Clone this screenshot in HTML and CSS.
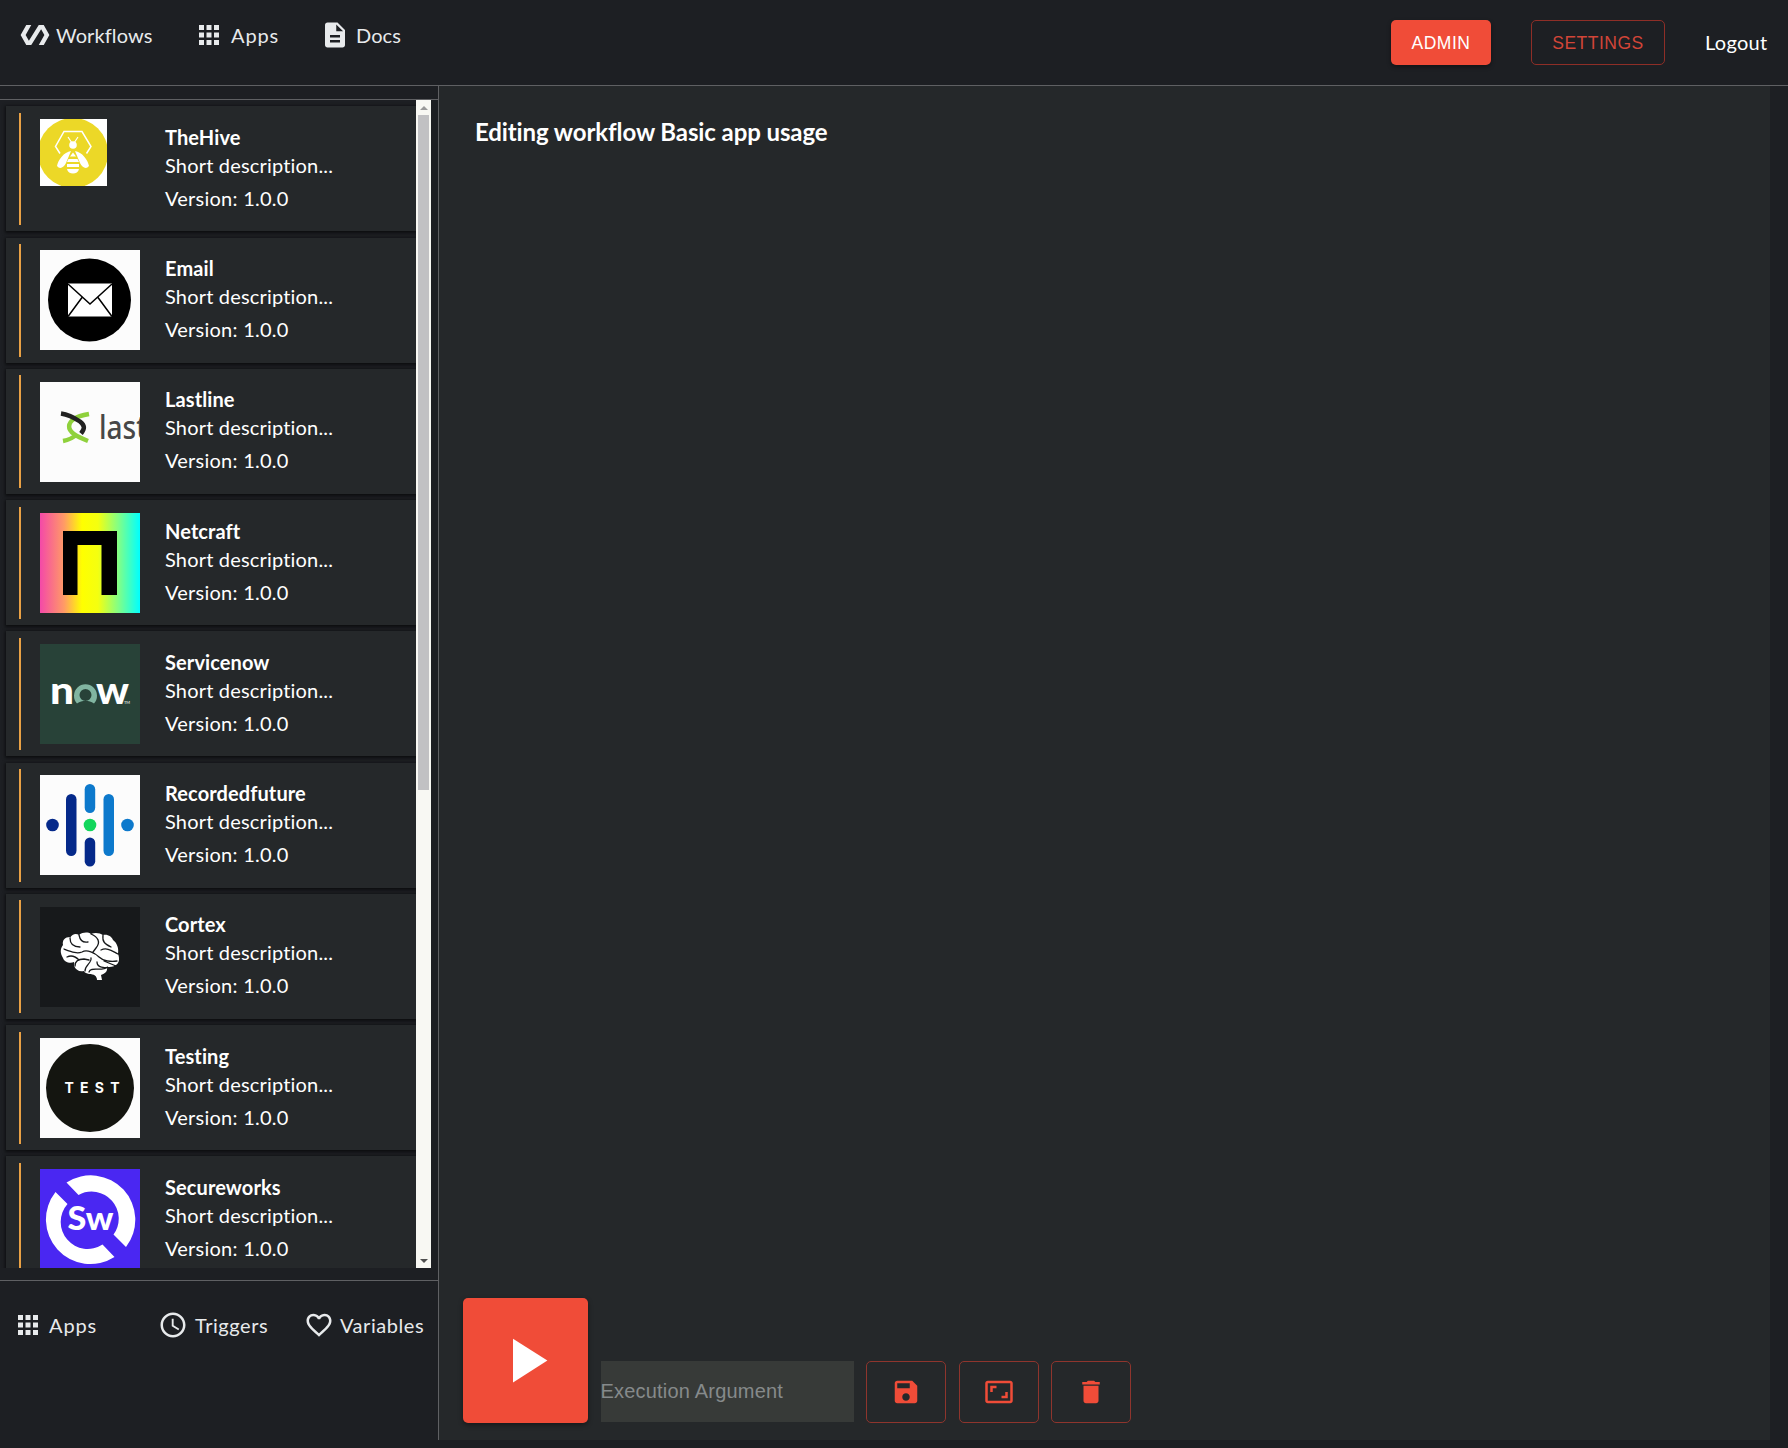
FILE: index.html
```html
<!DOCTYPE html>
<html lang="en">
<head>
<meta charset="utf-8">
<title>Editing workflow Basic app usage</title>
<link rel="stylesheet" href="styles.css">
</head>
<body>
<svg class="defs" width="0" height="0">
  <symbol id="grid" viewBox="0 0 24 24"><path d="M4 8h4V4H4v4zm6 12h4v-4h-4v4zm-6 0h4v-4H4v4zm0-6h4v-4H4v4zm6 0h4v-4h-4v4zm6-10v4h4V4h-4zm-6 4h4V4h-4v4zm6 6h4v-4h-4v4zm0 6h4v-4h-4v4z"/></symbol>
</svg>
<header class="header">
  <nav class="nav">
    <a class="nav-item nav-workflows"><svg class="icon" viewBox="0 0 24 24"><path d="M19 4h-4L7.11 16.63 4.5 12 9 4H5L.5 12 5 20h4l7.89-12.63L19.5 12 15 20h4l4.5-8z"/></svg><span>Workflows</span></a>
    <a class="nav-item nav-apps"><svg class="icon"><use href="#grid"/></svg><span class="wide">Apps</span></a>
    <a class="nav-item nav-docs"><svg class="icon" viewBox="0 0 24 24"><path d="M14 2H6c-1.1 0-1.99.9-1.99 2L4 20c0 1.1.89 2 1.99 2H18c1.1 0 2-.9 2-2V8l-6-6zm2 16H8v-2h8v2zm0-4H8v-2h8v2zm-3-5V3.5L18.500 9H13z"/></svg><span>Docs</span></a>
  </nav>
  <div class="account">
    <button class="btn btn-filled">ADMIN</button>
    <button class="btn btn-outline">SETTINGS</button>
    <a class="logout">Logout</a>
  </div>
</header>
<main class="main">
  <aside class="side">
    <div class="list">
      <div class="cards">
        <article class="card"><i class="bar"></i>
          <svg class="thumb thumb-small" viewBox="0 0 67 67"><path fill="#fff" d="M0 0h67v67H0z"/><circle cx="33" cy="34" r="35" fill="#ecd827"/><path d="M20 34.500L15.500 27.500 24 12.500h18l9 15-4.500 7" fill="none" stroke="#fff" stroke-width="1.500"/><g fill="#fff"><circle cx="33" cy="26" r="3.800"/><path d="M31 32c-7 1-13 9-14 15 3 4 7 1 9-3zM35 32c7 1 13 9 14 15-3 4-7 1-9-3z"/><path d="M30 37.500l3-4 3 4zM28.500 40h9l1.500 3H27zM27 45h12v3H27zM27 50h12c-1 6-11 6-12 0z"/></g><path d="M28 18l4 6M38 18l-4 6" stroke="#fff" stroke-width="1.200"/></svg>
          <div class="info"><h3>TheHive</h3><p class="desc">Short description...</p><p class="ver">Version: 1.0.0</p></div></article>
        <article class="card"><i class="bar"></i>
          <svg class="thumb" viewBox="0 0 100 100"><path fill="#fcfcfc" d="M0 0h100v100H0z"/><circle cx="49.500" cy="50" r="41.500"/><path fill="#fff" d="M28 33.500h44v33H28z"/><path d="M28 34l22 20 22-20M28 66.500l14-19M72 66.500l-14-19" fill="none" stroke="#000" stroke-width="1.500"/></svg>
          <div class="info"><h3>Email</h3><p class="desc">Short description...</p><p class="ver">Version: 1.0.0</p></div></article>
        <article class="card"><i class="bar"></i>
          <svg class="thumb" viewBox="0 0 100 100"><path fill="#fcfcfc" d="M0 0h100v100H0z"/><g fill="none" stroke-width="4.500"><path d="M23 59c6-1 10-3 14-7M48 59c-5-2-10-4-14-7-7-5-6-11 0-15 4-3 9-4 15-5" stroke="#8fd13c"/><path d="M21 31.500c7 1 13 4 19 8 5 4 5 7 1 12" stroke="#222"/></g><text x="59" y="57" font-family="Noto Sans" font-weight="500" font-size="33" textLength="48" lengthAdjust="spacingAndGlyphs" fill="#474747">last</text></svg>
          <div class="info"><h3>Lastline</h3><p class="desc">Short description...</p><p class="ver">Version: 1.0.0</p></div></article>
        <article class="card"><i class="bar"></i>
          <svg class="thumb" viewBox="0 0 100 100"><linearGradient id="rainbow"><stop offset="0" stop-color="#f449a8"/><stop offset=".24" stop-color="#ff9a66"/><stop offset=".42" stop-color="#ff0"/><stop offset=".58" stop-color="#f4ff10"/><stop offset=".78" stop-color="#84ff84"/><stop offset="1" stop-color="#0ff"/></linearGradient><path fill="url(#rainbow)" d="M0 0h100v100H0z"/><path d="M23 18h54v64H61.500V32h-24v50H23z"/></svg>
          <div class="info"><h3>Netcraft</h3><p class="desc">Short description...</p><p class="ver">Version: 1.0.0</p></div></article>
        <article class="card"><i class="bar"></i>
          <svg class="thumb" viewBox="0 0 100 100"><path fill="#284238" d="M0 0h100v100H0z"/><g fill="#fff" font-family="Lato" font-weight="900" font-size="38"><text x="10" y="60" textLength="24" lengthAdjust="spacingAndGlyphs">n</text><text x="56" y="60" textLength="33" lengthAdjust="spacingAndGlyphs">w</text></g><path d="M37 59.500a11.500 11.500 0 1 1 17 0c-3-2-5-2.500-8.500-2.500S40 57.500 37 59.500zM45.500 45a6 6 0 1 0 0 12 6 6 0 0 0 0-12z" fill="#81b5a1" fill-rule="evenodd"/><text x="84" y="60" font-family="Lato" font-size="4" fill="#fff">TM</text></svg>
          <div class="info"><h3>Servicenow</h3><p class="desc">Short description...</p><p class="ver">Version: 1.0.0</p></div></article>
        <article class="card"><i class="bar"></i>
          <svg class="thumb" viewBox="0 0 100 100"><path fill="#fcfcfc" d="M0 0h100v100H0z"/><g fill="#05298a"><circle cx="12.500" cy="50" r="6.300"/><rect x="26" y="19" width="10.500" height="62" rx="5.250"/><rect x="44.700" y="62.500" width="10.500" height="29" rx="5.250"/></g><g fill="#0d79cc"><rect x="44.700" y="9" width="10.500" height="29" rx="5.250"/><rect x="63.500" y="19" width="10.500" height="62" rx="5.250"/><circle cx="87.500" cy="50" r="6.300"/></g><circle cx="50" cy="50" r="6.300" fill="#12d65c"/></svg>
          <div class="info"><h3>Recordedfuture</h3><p class="desc">Short description...</p><p class="ver">Version: 1.0.0</p></div></article>
        <article class="card"><i class="bar"></i>
          <svg class="thumb" viewBox="0 0 100 100"><path fill="#17191b" d="M0 0h100v100H0z"/><path fill="#fff" d="M30 31c2-4 6-5 9-3 4-3 9-3 12-1 4-2 9-1 12 1 5-1 9 2 10 5 4 3 6 8 5 14 2 5 1 9-2 11-3 2-6 2-9 2 1 5-3 7-6 8l1 5h-5c0-4-3-6-8-6-4-1-5-2-5-3-5 1-8-1-10-5v-4c-4 2-10 0-11-4-3-5-3-9 0-13-1-5 2-8 7-8z"/><g fill="none" stroke="#17191b" stroke-width="1.300" stroke-linecap="round"><path d="M24 42c8 3 13 5 18 3 5-3 13 1 17 5s12 5 18 4M30 31c0 7 4 9 10 9M39 28c1 5 4 8 9 7M51 27c7 3 10 8 5 14l-3 4M63 28c-1 7 2 9 8 12M61 43c6-3 11 1 17 4M27 50c4-2 8-1 12 3M35 59c0-5 4-7 9-7l5 1M51 51c1 5-6 7-6 13M57 55c0 6 8 6 11 5-7 5-17-1-19 5M64 54l12 5"/></g></svg>
          <div class="info"><h3>Cortex</h3><p class="desc">Short description...</p><p class="ver">Version: 1.0.0</p></div></article>
        <article class="card"><i class="bar"></i>
          <svg class="thumb" viewBox="0 0 100 100"><path fill="#fcfcfc" d="M0 0h100v100H0z"/><circle cx="50" cy="50" r="44" fill="#141510"/><text x="24.500" y="55" font-family="Inter" font-weight="700" font-size="14" textLength="55" fill="#fff">TEST</text></svg>
          <div class="info"><h3>Testing</h3><p class="desc">Short description...</p><p class="ver">Version: 1.0.0</p></div></article>
        <article class="card"><i class="bar"></i>
          <svg class="thumb" viewBox="0 0 100 100"><path fill="#4a27f2" d="M0 0h100v100H0z"/><g fill="#fff"><path d="M26.500 13.500A44.500 44.500 0 0 1 86 78L73.500 65.500A27 27 0 0 0 38.500 26z"/><path d="M15.500 23A44.500 44.500 0 0 0 74.500 88L62.500 75.500A27 27 0 0 1 27.500 35z"/><text x="27.500" y="61" font-family="Lato" font-weight="900" font-size="32" textLength="46" lengthAdjust="spacingAndGlyphs">Sw</text></g></svg>
          <div class="info"><h3>Secureworks</h3><p class="desc">Short description...</p><p class="ver">Version: 1.0.0</p></div></article>
      </div>
      <div class="scroll"><i class="up"></i><i class="handle"></i><i class="down"></i></div>
    </div>
    <nav class="tabs">
      <a class="tab tab-apps"><svg class="icon"><use href="#grid"/></svg><span class="wide">Apps</span></a>
      <a class="tab tab-triggers"><svg class="icon" viewBox="0 0 24 24"><path d="M11.990 2C6.470 2 2 6.480 2 12s4.470 10 9.990 10C17.520 22 22 17.520 22 12S17.520 2 11.990 2zM12 20c-4.420 0-8-3.580-8-8s3.580-8 8-8 8 3.580 8 8-3.580 8-8 8zm.5-13H11v6l5.250 3.150.75-1.230-4.500-2.670z"/></svg><span>Triggers</span></a>
      <a class="tab tab-variables"><svg class="icon" viewBox="0 0 24 24"><path d="M16.500 3c-1.740 0-3.410.81-4.500 2.090C10.910 3.810 9.240 3 7.500 3 4.420 3 2 5.420 2 8.500c0 3.780 3.400 6.860 8.550 11.540L12 21.350l1.450-1.320C18.600 15.360 22 12.280 22 8.500 22 5.420 19.580 3 16.500 3zm-4.400 15.550l-.1.100-.1-.1C7.140 14.240 4 11.390 4 8.500 4 6.500 5.500 5 7.500 5c1.540 0 3.040.99 3.570 2.360h1.870C13.460 5.990 14.960 5 16.500 5c2 0 3.500 1.500 3.500 3.500 0 2.890-3.140 5.740-7.900 10.050z"/></svg><span>Variables</span></a>
    </nav>
  </aside>
  <section class="canvas">
    <h2 class="title">Editing workflow Basic app usage</h2>
    <div class="tools">
      <button class="play"><svg viewBox="0 0 24 24"><path d="M8 5v14l11-7z"/></svg></button>
      <input class="arg" placeholder="Execution Argument">
      <button class="tool"><svg class="icon" viewBox="0 0 24 24"><path d="M17 3H5c-1.110 0-2 .9-2 2v14c0 1.100.89 2 2 2h14c1.100 0 2-.9 2-2V7l-4-4zm-5 16c-1.660 0-3-1.340-3-3s1.340-3 3-3 3 1.340 3 3-1.340 3-3 3zm3-10H5V5h10v4z"/></svg></button>
      <button class="tool"><svg class="icon" viewBox="0 0 24 24"><path d="M19 12h-2v3h-3v2h5v-5zM7 9h3V7H5v5h2V9zm14-6H3c-1.100 0-2 .9-2 2v14c0 1.100.9 2 2 2h18c1.100 0 2-.9 2-2V5c0-1.100-.9-2-2-2zm0 16.010H3V4.990h18v14.020z"/></svg></button>
      <button class="tool"><svg class="icon" viewBox="0 0 24 24"><path d="M6 19c0 1.100.9 2 2 2h8c1.100 0 2-.9 2-2V7H6v12zM19 4h-3.500l-1-1h-5l-1 1H5v2h14V4z"/></svg></button>
    </div>
  </section>
</main>
</body>
</html>
```
FILE: styles.css
```css
* { box-sizing: border-box; }
body {
  margin: 0;
  height: 1448px;
  overflow: hidden;
  display: flex;
  flex-direction: column;
  background: #1d1f23;
  color: #fff;
  font: 20px/30px Lato, "Open Sans", sans-serif;
}
h2, h3, p { margin: 0; }
button { font-family: "Liberation Sans", Arial, sans-serif; padding: 0; }
.defs { display: block; position: absolute; }
.icon { width: 30px; height: 30px; fill: currentColor; flex: none; display: block; }

.header {
  height: 86px;
  flex: none;
  display: flex;
  justify-content: space-between;
  padding: 20px 21px 0 20px;
  border-bottom: 1px solid #5f6063;
}
.nav, .nav-item, .tab, .account { display: flex; }
.nav { color: #e8eaec; }
.nav-item span, .tab span { white-space: nowrap; letter-spacing: .1px; }
.nav-item .wide, .tab .wide { letter-spacing: .9px; }
.nav-workflows { width: 174px; gap: 6px; }
.nav-apps { width: 126px; gap: 7px; }
.nav-docs { gap: 6px; }
.account { height: 45px; align-items: center; gap: 40px; }
.btn {
  height: 45px;
  padding-top: 2px;
  border-radius: 5px;
  font-size: 17.5px;
  letter-spacing: .5px;
}
.btn-filled { width: 100px; border: 0; background: #f04c38; color: #fff; box-shadow: 0 2px 4px #0006; }
.btn-outline { width: 134px; border: 1px solid #8e2e27; background: none; color: #d24538; }
.logout { width: 62px; padding-bottom: 2px; white-space: nowrap; letter-spacing: .3px; }

.main { display: flex; height: 1354px; }
.side { width: 439px; border-right: 1px solid #5f6063; flex: none; }
.list {
  margin-top: 13px;
  border-top: 1px solid #5f6063;
  border-bottom: 1px solid #5f6063;
  height: 1182px;
  padding-bottom: 12px;
  display: flex;
}
.cards { width: 416px; padding-left: 6px; overflow: hidden; }
.card {
  height: 125px;
  margin-top: 6.250px;
  padding: 6.500px 0 0 12.500px;
  display: flex;
  background: #25282a;
  box-shadow: 0 1px 3px 1px #0009;
}
.bar { width: 2.500px; height: 112.500px; background: #e9a145; flex: none; }
.thumb { width: 100px; height: 100px; margin: 6.250px 25px 0 19px; flex: none; }
.thumb-small { width: 67px; height: 67px; margin-right: 58px; }
.info { padding-top: 11px; line-height: 28px; }
.info h3 { font-size: 20px; line-height: 27px; font-weight: 700; letter-spacing: .1px; }
.desc { letter-spacing: .18px; }
.ver { padding-top: 5px; letter-spacing: .25px; }

.scroll {
  width: 15px;
  background: #f8f8f3;
  display: flex;
  flex-direction: column;
  align-items: center;
  padding: 6px 0 5px;
}
.up, .down { border: 4px solid transparent; border-top-width: 0; border-bottom: 4px solid #999; }
.down { border-top: 4px solid #505050; border-bottom-width: 0; margin-top: auto; }
.handle { width: 11px; height: 675px; margin-top: 5px; background: #c1c1c3; }

.tabs { display: flex; padding: 29px 0 0 13px; color: #e8eaec; }
.tab-apps { width: 145px; gap: 6px; }
.tab-triggers { width: 146px; gap: 7px; }
.tab-variables { gap: 6px; }
.tab span { letter-spacing: .55px; }

.canvas {
  width: 1331px;
  background: #25282a;
  padding: 30px 0 17px 24px;
  display: flex;
  flex-direction: column;
  justify-content: space-between;
}
.title { padding-left: 12px; font-size: 24px; line-height: 32px; font-weight: 700; letter-spacing: -.1px; }
.tools { display: flex; align-items: flex-end; gap: 12.500px; }
.play {
  width: 125px;
  height: 125px;
  border: 0;
  border-radius: 5px;
  background: #f04c38;
  box-shadow: 0 2px 5px #0006;
  display: grid;
  place-items: center;
}
.play svg { width: 75px; height: 75px; fill: #fff; }
.arg {
  width: 253px;
  height: 61px;
  margin-bottom: 1px;
  padding: 0;
  border: 0;
  background: #373a38;
  font: 20px "Liberation Sans", Arial, sans-serif;
  letter-spacing: .2px;
}
.arg::placeholder { color: #868a8b; }
.tool {
  width: 80px;
  height: 62px;
  border: 1px solid #8f352d;
  border-radius: 5px;
  background: none;
  color: #f04c38;
  display: grid;
  place-items: center;
}
```
